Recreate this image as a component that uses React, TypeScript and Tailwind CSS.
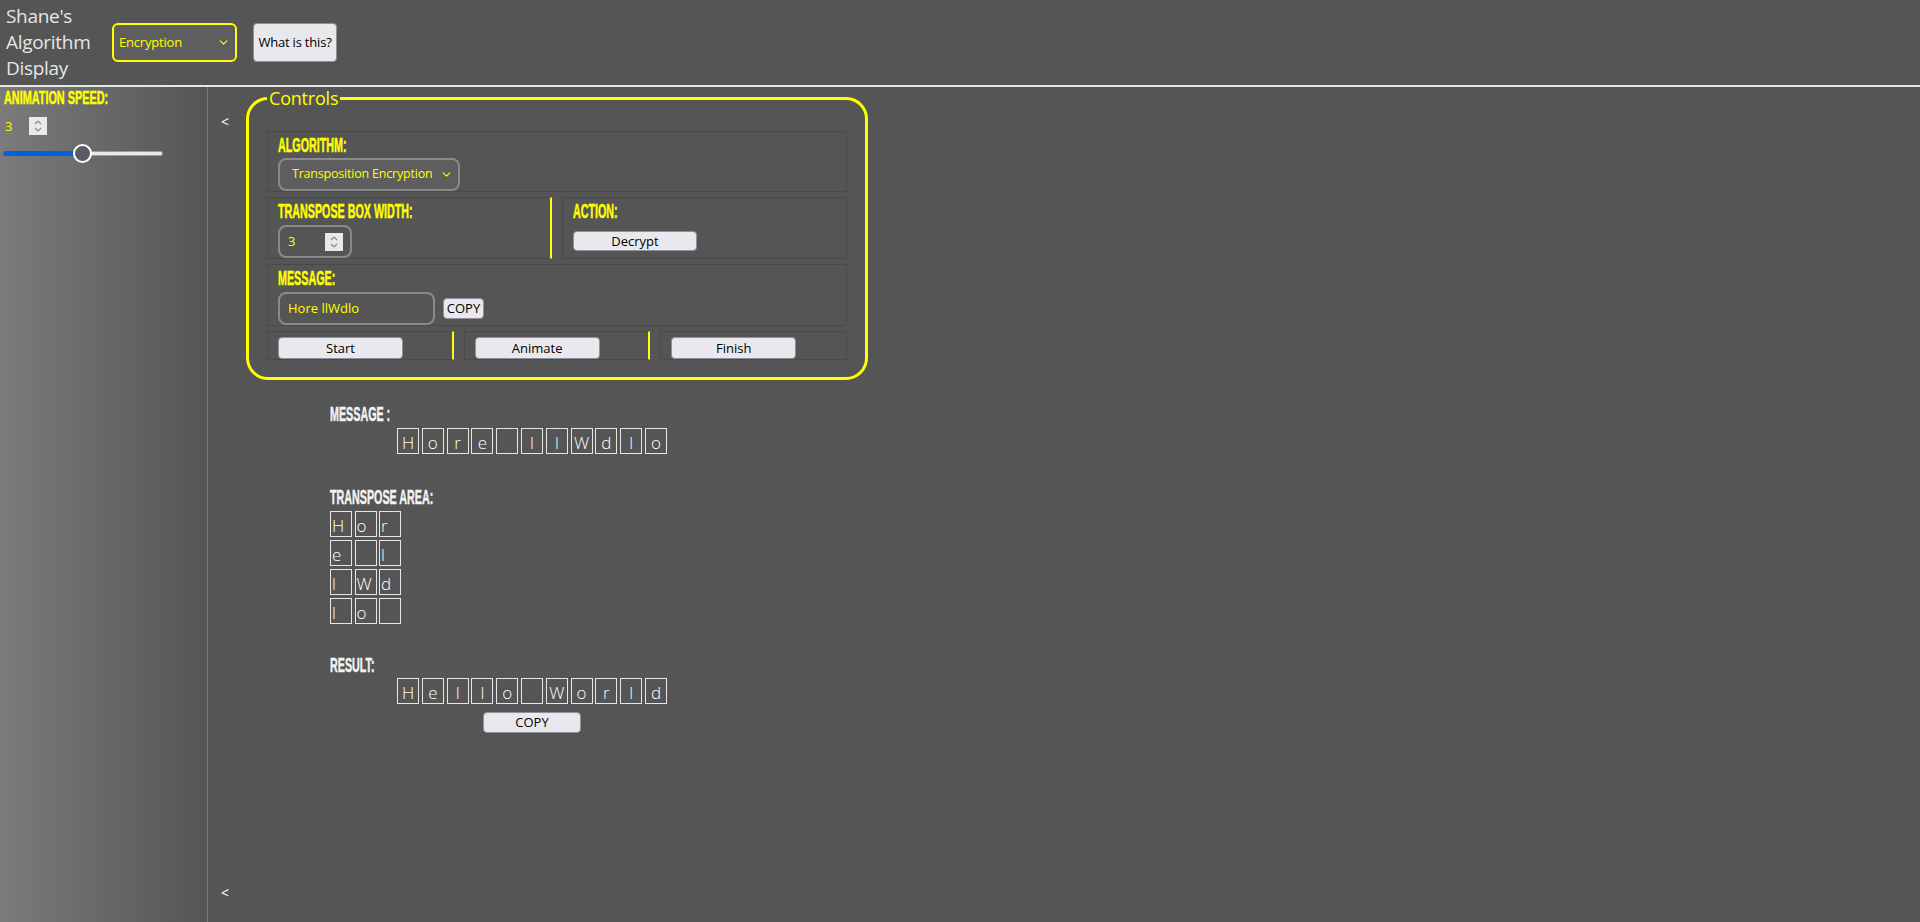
import React from "react";
import { ChevronDown } from "lucide-react";

const LB =
  "block w-max origin-left whitespace-nowrap font-['Liberation_Sans',Arial,sans-serif] font-bold leading-none [-webkit-text-stroke:0.5px_currentColor]";

function Spinner() {
  return (
    <div className="w-[18px] h-[18px] bg-[#e9e9ed] flex items-center justify-center shrink-0">
      <svg width="10" height="14" viewBox="0 0 10 14" fill="none" stroke="#8a8a8a" strokeWidth="1.2">
        <polyline points="2,5 5,2 8,5" />
        <polyline points="2,9 5,12 8,9" />
      </svg>
    </div>
  );
}

function Btn({ children, className }: { children: React.ReactNode; className: string }) {
  return (
    <button
      className={
        "bg-[#e9e9ed] border border-[#8f8f9d] rounded-[4px] text-[13px] text-black leading-none whitespace-nowrap flex items-center justify-center font-['Open_Sans','Noto_Sans',sans-serif] " +
        className
      }
    >
      {children}
    </button>
  );
}

function LetterBox({ ch }: { ch: string }) {
  return (
    <div className="w-[22px] h-[26px] border border-[#e6e6e6] flex items-center justify-center pt-[3px] text-[17px] font-light leading-none text-white">
      {ch === " " ? "\u00a0" : ch}
    </div>
  );
}

function GridBox({ ch }: { ch: string }) {
  return (
    <div className="w-[22px] h-[26px] border border-[#e6e6e6] flex items-center justify-start pl-[1px] pt-[3px] text-[17px] font-light leading-none text-white">
      {ch === " " || ch === "" ? "\u00a0" : ch}
    </div>
  );
}

export default function App() {
  const message = "Hore llWdlo".split("");
  const result = "Hello World".split("");
  const grid = [
    ["H", "o", "r"],
    ["e", " ", "l"],
    ["l", "W", "d"],
    ["l", "o", ""],
  ];

  return (
    <div className="w-[1920px] h-[922px] overflow-hidden bg-[#555555] flex flex-col font-['Open_Sans','Noto_Sans',sans-serif]">
      {/* Header */}
      <header className="h-[85px] shrink-0 flex items-center">
        <div className="ml-[6px] -mt-[2px] w-[100px] text-[19px] leading-[26px] tracking-[-0.3px] text-[#e6e6e6]">
          Shane's
          <br />
          Algorithm
          <br />
          Display
        </div>
        <div className="ml-[6px] w-[125px] h-[39px] border-2 border-[#ffff00] rounded-[6px] bg-[#5e5e5e] flex items-center justify-between pl-[5px] pr-[5px] text-[13px] tracking-[-0.2px] text-[#ffff00]">
          <span>Encryption</span>
          <ChevronDown size={13} strokeWidth={2} color="#ffff00" />
        </div>
        <Btn className="ml-[16px] w-[84px] h-[39px] tracking-[-0.2px]">What is this?</Btn>
      </header>
      <div className="h-[2px] shrink-0 bg-[#e6e6e6]" />

      <div className="flex flex-1 min-h-0">
        {/* Sidebar */}
        <aside className="w-[208px] shrink-0 border-r border-[#7c7c7c] bg-linear-to-r from-[#7b7b7b] to-[#555555] pt-[2.5px]">
          <span className={`${LB} ml-[4px] text-[17.5px] scale-x-[0.62] text-[#ffff00]`}>ANIMATION SPEED:</span>
          <div className="mt-[10px] h-[18px] flex items-center">
            <span className="ml-[5px] w-[24px] text-[13px] leading-none text-[#ffff00]">3</span>
            <Spinner />
          </div>
          <div className="relative mt-[8.5px] ml-[3px] w-[160px] h-[19px]">
            <div className="absolute left-0 right-0 top-[7px] h-[5px] rounded-full bg-[#e9e9ed] border border-[#9a9aa6]" />
            <div className="absolute left-0 top-[7px] h-[5px] w-[76px] rounded-full bg-[#0060df]" />
            <div className="absolute left-[69.5px] top-0 w-[19px] h-[19px] rounded-full bg-[#5b5b66] border-2 border-white" />
          </div>
        </aside>

        {/* Collapse column */}
        <div className="w-[35px] shrink-0 border-r border-[#575757] bg-[#555555] flex flex-col justify-between items-center pt-[26px] pb-[20px] text-[14px] leading-[18px] text-white">
          <span>&lt;</span>
          <span>&lt;</span>
        </div>

        {/* Main */}
        <main className="pl-[3px] flex flex-col">
          <fieldset className="w-[622px] border-[3px] border-[#ffff00] rounded-[22px] px-[18px] pt-[22px] pb-[17px]">
            <legend className="px-[2px] text-[18px] leading-[22px] tracking-[-0.2px] text-[#ffff00]">Controls</legend>
            <div className="flex flex-col gap-[5px]">
              {/* Row 1 */}
              <div className="border border-[#4a4a4a] pl-[10px] pt-[3.5px]">
                <span className={`${LB} text-[19.5px] scale-x-[0.55] text-[#ffff00]`}>ALGORITHM:</span>
                <div className="mt-[3px] w-[182px] h-[33px] border-2 border-[#8a8a8a] rounded-[8px] bg-[#5e5e5e] flex items-center justify-between pl-[12px] pr-[5px] text-[12.5px] tracking-[-0.2px] whitespace-nowrap text-[#ffff00]">
                  <span>Transposition Encryption</span>
                  <ChevronDown size={13} strokeWidth={2} color="#ffff00" />
                </div>
              </div>

              {/* Row 2 */}
              <div className="grid grid-cols-2 gap-[10px]">
                <div className="border border-[#4a4a4a] border-r-2 border-r-[#ffff00] pl-[10px] pt-[3.5px]">
                  <span className={`${LB} text-[19.5px] scale-x-[0.55] text-[#ffff00]`}>TRANSPOSE BOX WIDTH:</span>
                  <div className="mt-[4px] w-[74px] h-[33px] border-2 border-[#8a8a8a] rounded-[8px] flex items-center justify-between pl-[8px] pr-[7px] text-[13px] text-[#ffff00]">
                    <span>3</span>
                    <Spinner />
                  </div>
                </div>
                <div className="border border-[#4a4a4a] pl-[10px] pt-[3.5px]">
                  <span className={`${LB} text-[19.5px] scale-x-[0.55] text-[#ffff00]`}>ACTION:</span>
                  <Btn className="mt-[10px] w-[124px] h-[20px]">Decrypt</Btn>
                </div>
              </div>

              {/* Row 3 */}
              <div className="border border-[#4a4a4a] pl-[10px] pt-[3.5px]">
                <span className={`${LB} text-[19.5px] scale-x-[0.55] text-[#ffff00]`}>MESSAGE:</span>
                <div className="mt-[4px] flex items-center gap-[8px]">
                  <div className="w-[157px] h-[33px] border-2 border-[#8a8a8a] rounded-[8px] flex items-center pl-[8px] text-[13px] text-[#ffff00]">
                    Hore llWdlo
                  </div>
                  <Btn className="w-[41px] h-[21px]">COPY</Btn>
                </div>
              </div>

              {/* Row 4 */}
              <div className="grid grid-cols-3 gap-[10px]">
                <div className="border border-[#4a4a4a] border-r-2 border-r-[#ffff00] pl-[10px] pt-[5px]">
                  <Btn className="w-[125px] h-[22px]">Start</Btn>
                </div>
                <div className="border border-[#4a4a4a] border-r-2 border-r-[#ffff00] pl-[10px] pt-[5px]">
                  <Btn className="w-[125px] h-[22px]">Animate</Btn>
                </div>
                <div className="border border-[#4a4a4a] pl-[10px] pt-[5px]">
                  <Btn className="w-[125px] h-[22px]">Finish</Btn>
                </div>
              </div>
            </div>
          </fieldset>

          {/* Display section */}
          <div className="ml-[84px] mt-[24.5px] w-[404px]">
            <span className={`${LB} text-[19.5px] scale-x-[0.55] text-[#f2f2f2]`}>MESSAGE :</span>
            <div className="mt-[4px] flex justify-center gap-[2.8px]">
              {message.map((c, i) => (
                <LetterBox key={i} ch={c} />
              ))}
            </div>

            <span className={`${LB} mt-[33.5px] text-[19.5px] scale-x-[0.55] text-[#f2f2f2]`}>TRANSPOSE AREA:</span>
            <div className="mt-[4px] grid grid-cols-[repeat(3,22px)] gap-x-[2.5px] gap-y-[3px] w-max">
              {grid.flat().map((c, i) => (
                <GridBox key={i} ch={c} />
              ))}
            </div>

            <span className={`${LB} mt-[31.5px] text-[19.5px] scale-x-[0.55] text-[#f2f2f2]`}>RESULT:</span>
            <div className="mt-[3px] flex justify-center gap-[2.8px]">
              {result.map((c, i) => (
                <LetterBox key={i} ch={c} />
              ))}
            </div>
            <div className="mt-[8px] flex justify-center">
              <Btn className="w-[98px] h-[21px]">COPY</Btn>
            </div>
          </div>
        </main>
      </div>
    </div>
  );
}
